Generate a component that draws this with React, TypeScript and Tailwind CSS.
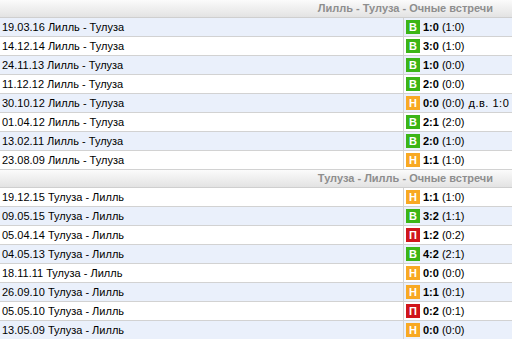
import React from 'react';

type Match = { date: string; teams: string; res: 'В' | 'Н' | 'П'; score: string; half: string; extra?: string };

const lilleHome: Match[] = [
  { date: '19.03.16', teams: 'Лилль - Тулуза', res: 'В', score: '1:0', half: '(1:0)' },
  { date: '14.12.14', teams: 'Лилль - Тулуза', res: 'В', score: '3:0', half: '(1:0)' },
  { date: '24.11.13', teams: 'Лилль - Тулуза', res: 'В', score: '1:0', half: '(0:0)' },
  { date: '11.12.12', teams: 'Лилль - Тулуза', res: 'В', score: '2:0', half: '(0:0)' },
  { date: '30.10.12', teams: 'Лилль - Тулуза', res: 'Н', score: '0:0', half: '(0:0)', extra: 'д.в. 1:0' },
  { date: '01.04.12', teams: 'Лилль - Тулуза', res: 'В', score: '2:1', half: '(2:0)' },
  { date: '13.02.11', teams: 'Лилль - Тулуза', res: 'В', score: '2:0', half: '(1:0)' },
  { date: '23.08.09', teams: 'Лилль - Тулуза', res: 'Н', score: '1:1', half: '(1:0)' },
];

const toulouseHome: Match[] = [
  { date: '19.12.15', teams: 'Тулуза - Лилль', res: 'Н', score: '1:1', half: '(1:0)' },
  { date: '09.05.15', teams: 'Тулуза - Лилль', res: 'В', score: '3:2', half: '(1:1)' },
  { date: '05.04.14', teams: 'Тулуза - Лилль', res: 'П', score: '1:2', half: '(0:2)' },
  { date: '04.05.13', teams: 'Тулуза - Лилль', res: 'В', score: '4:2', half: '(2:1)' },
  { date: '18.11.11', teams: 'Тулуза - Лилль', res: 'Н', score: '0:0', half: '(0:0)' },
  { date: '26.09.10', teams: 'Тулуза - Лилль', res: 'Н', score: '1:1', half: '(0:1)' },
  { date: '05.05.10', teams: 'Тулуза - Лилль', res: 'П', score: '0:2', half: '(0:1)' },
  { date: '13.05.09', teams: 'Тулуза - Лилль', res: 'Н', score: '0:0', half: '(0:0)' },
];

const badgeColor = {
  'В': 'bg-[#3bb516]',
  'Н': 'bg-[#f8a923]',
  'П': 'bg-[#d0151b]',
};

const Header: React.FC<{ title: string }> = ({ title }) => (
  <div className="h-[18px] bg-gradient-to-b from-[#fbfbfb] to-[#e3e3e3] border-b border-[#cfcfcf] flex items-center justify-end pr-[19px]">
    <span className="text-[11px] font-bold text-[#8e8e8e] leading-none">{title}</span>
  </div>
);

const Row: React.FC<{ m: Match; blue: boolean }> = ({ m, blue }) => (
  <div className={`h-[19px] flex border-b border-[#d2d2d2] ${blue ? 'bg-[#eaf0fb]' : 'bg-white'}`}>
    <div className="w-[404px] border-r border-[#d2d2d2] pl-[2px] flex items-center">
      {m.date} {m.teams}
    </div>
    <div className="flex-1 flex items-center pl-[2px] whitespace-nowrap">
      <span className={`w-[14px] h-[14px] ${badgeColor[m.res]} text-white font-bold text-[11px] flex items-center justify-center leading-none`}>
        {m.res}
      </span>
      <span className="ml-[3px] font-bold">{m.score}</span>
      <span className="ml-[3px]">{m.half}</span>
      {m.extra && <span className="ml-[4px] tracking-[0.5px]">{m.extra}</span>}
    </div>
  </div>
);

export default function App() {
  return (
    <div className="w-[512px] h-[339px] overflow-hidden bg-white text-[11px] text-black leading-none" style={{ fontFamily: '"Liberation Sans", Arial, sans-serif' }}>
      <Header title="Лилль - Тулуза - Очные встречи" />
      {lilleHome.map((m, i) => (
        <Row key={m.date} m={m} blue={i % 2 === 0} />
      ))}
      <Header title="Тулуза - Лилль - Очные встречи" />
      {toulouseHome.map((m, i) => (
        <Row key={m.date} m={m} blue={i % 2 === 1} />
      ))}
    </div>
  );
}
